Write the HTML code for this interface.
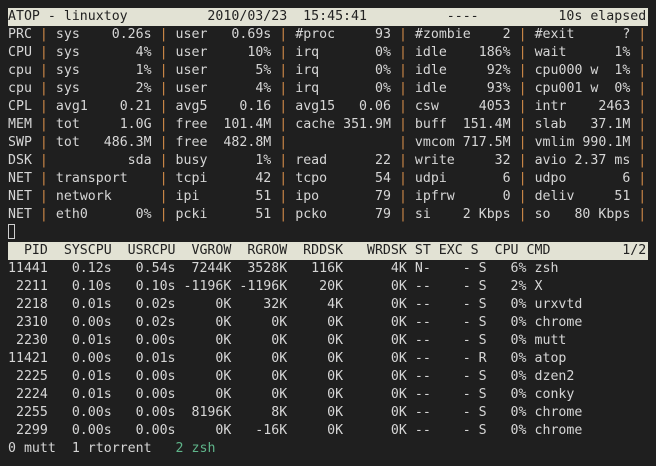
<!DOCTYPE html>
<html><head><meta charset="utf-8"><style>
html,body{margin:0;padding:0;background:#1f1f1f;width:656px;height:466px}
html{overflow:hidden}
pre{position:absolute;left:8px;top:8px;width:700px;margin:0;font-family:"DejaVu Sans Mono","Liberation Mono",monospace;font-size:13.25px;line-height:18px;color:#d6d6d6;white-space:pre}
.b{background:#e2e2d4;color:#222;display:inline-block;width:640px;white-space:pre}
.p{color:#d08a48}
.g{color:#5fb58a}
.c{display:inline-block;width:7px;height:15px;border:1px solid #cfcfcf;box-sizing:border-box;vertical-align:-3px}
</style></head><body><pre><span class="b">ATOP - linuxtoy          2010/03/23  15:45:41          ----          10s elapsed</span>
PRC <span class="p">|</span> sys    0.26s <span class="p">|</span> user   0.69s <span class="p">|</span> #proc     93 <span class="p">|</span> #zombie    2 <span class="p">|</span> #exit      ? <span class="p">|</span>
CPU <span class="p">|</span> sys       4% <span class="p">|</span> user     10% <span class="p">|</span> irq       0% <span class="p">|</span> idle    186% <span class="p">|</span> wait      1% <span class="p">|</span>
cpu <span class="p">|</span> sys       1% <span class="p">|</span> user      5% <span class="p">|</span> irq       0% <span class="p">|</span> idle     92% <span class="p">|</span> cpu000 w  1% <span class="p">|</span>
cpu <span class="p">|</span> sys       2% <span class="p">|</span> user      4% <span class="p">|</span> irq       0% <span class="p">|</span> idle     93% <span class="p">|</span> cpu001 w  0% <span class="p">|</span>
CPL <span class="p">|</span> avg1    0.21 <span class="p">|</span> avg5    0.16 <span class="p">|</span> avg15   0.06 <span class="p">|</span> csw     4053 <span class="p">|</span> intr    2463 <span class="p">|</span>
MEM <span class="p">|</span> tot     1.0G <span class="p">|</span> free  101.4M <span class="p">|</span> cache 351.9M <span class="p">|</span> buff  151.4M <span class="p">|</span> slab   37.1M <span class="p">|</span>
SWP <span class="p">|</span> tot   486.3M <span class="p">|</span> free  482.8M <span class="p">|</span>              <span class="p">|</span> vmcom 717.5M <span class="p">|</span> vmlim 990.1M <span class="p">|</span>
DSK <span class="p">|</span>          sda <span class="p">|</span> busy      1% <span class="p">|</span> read      22 <span class="p">|</span> write     32 <span class="p">|</span> avio 2.37 ms <span class="p">|</span>
NET <span class="p">|</span> transport    <span class="p">|</span> tcpi      42 <span class="p">|</span> tcpo      54 <span class="p">|</span> udpi       6 <span class="p">|</span> udpo       6 <span class="p">|</span>
NET <span class="p">|</span> network      <span class="p">|</span> ipi       51 <span class="p">|</span> ipo       79 <span class="p">|</span> ipfrw      0 <span class="p">|</span> deliv     51 <span class="p">|</span>
NET <span class="p">|</span> eth0      0% <span class="p">|</span> pcki      51 <span class="p">|</span> pcko      79 <span class="p">|</span> si    2 Kbps <span class="p">|</span> so   80 Kbps <span class="p">|</span>
<span class="c"></span>
<span class="b">  PID  SYSCPU  USRCPU  VGROW  RGROW  RDDSK   WRDSK ST EXC S  CPU CMD         1/2</span>
11441   0.12s   0.54s  7244K  3528K   116K      4K N-    - S   6% zsh
 2211   0.10s   0.10s -1196K -1196K    20K      0K --    - S   2% X
 2218   0.01s   0.02s     0K    32K     4K      0K --    - S   0% urxvtd
 2310   0.00s   0.02s     0K     0K     0K      0K --    - S   0% chrome
 2230   0.01s   0.00s     0K     0K     0K      0K --    - S   0% mutt
11421   0.00s   0.01s     0K     0K     0K      0K --    - R   0% atop
 2225   0.01s   0.00s     0K     0K     0K      0K --    - S   0% dzen2
 2224   0.01s   0.00s     0K     0K     0K      0K --    - S   0% conky
 2255   0.00s   0.00s  8196K     8K     0K      0K --    - S   0% chrome
 2299   0.00s   0.00s     0K   -16K     0K      0K --    - S   0% chrome
0 mutt  1 rtorrent   <span class="g">2 zsh</span></pre></body></html>
